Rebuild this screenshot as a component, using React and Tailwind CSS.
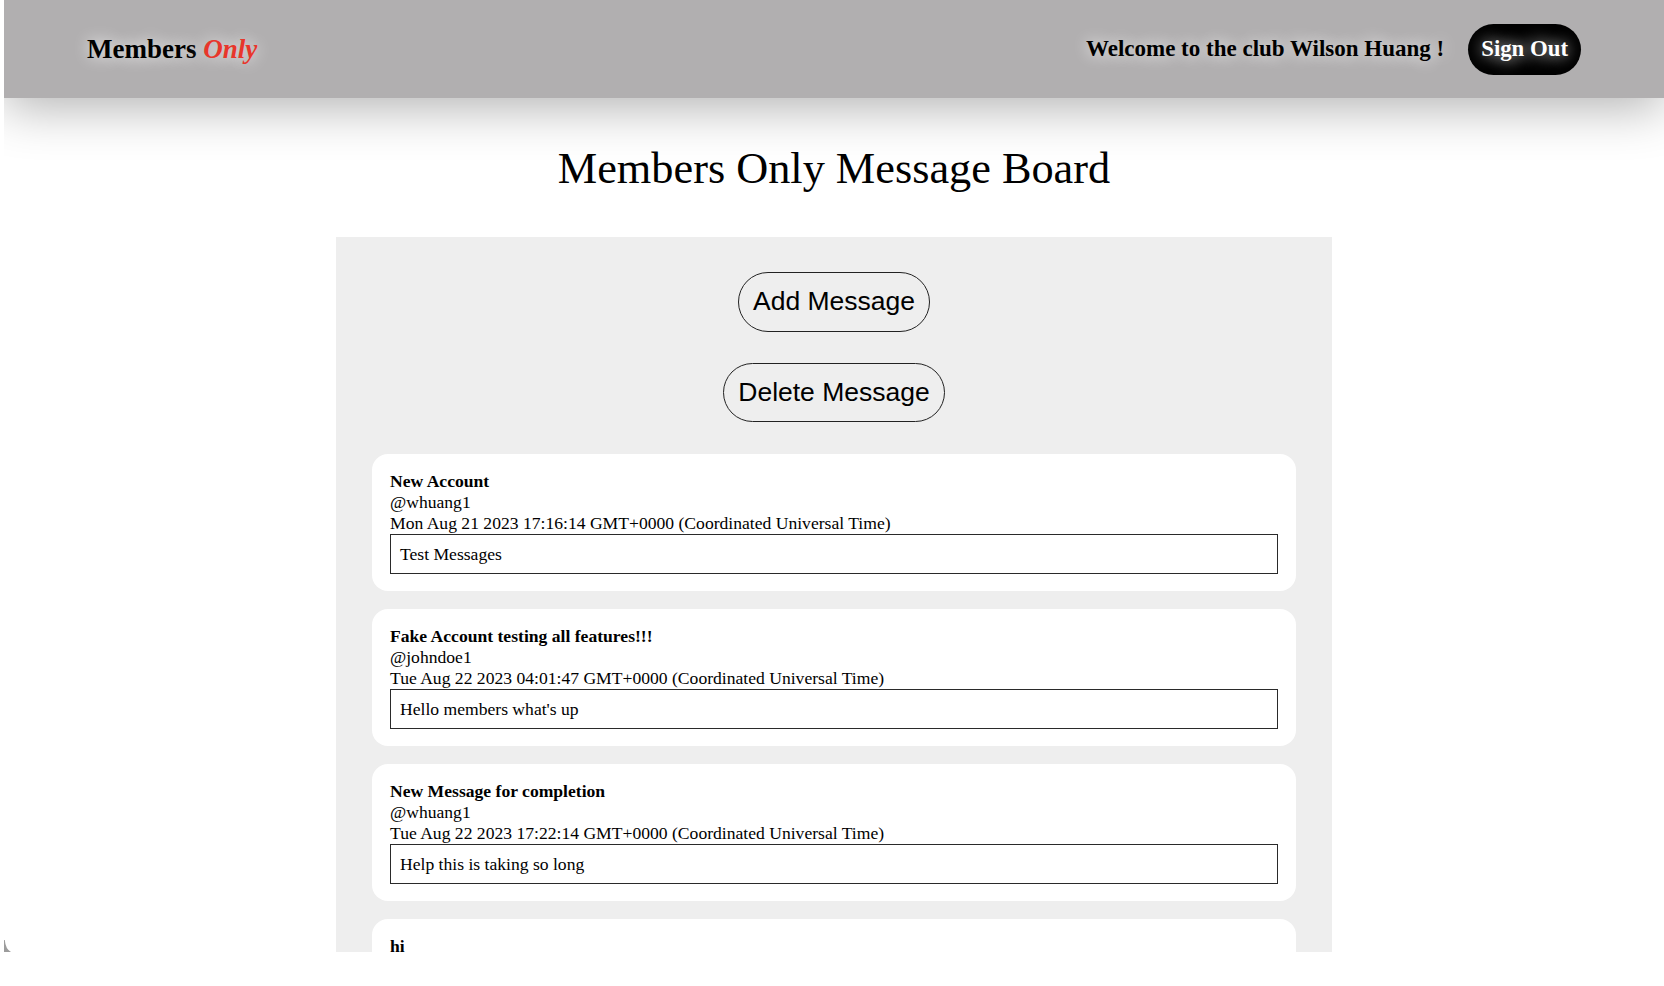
import React from 'react';

const messages = [
  {
    id: 1,
    title: 'New Account',
    username: 'whuang1',
    date: 'Mon Aug 21 2023 17:16:14 GMT+0000 (Coordinated Universal Time)',
    text: 'Test Messages',
  },
  {
    id: 2,
    title: 'Fake Account testing all features!!!',
    username: 'johndoe1',
    date: 'Tue Aug 22 2023 04:01:47 GMT+0000 (Coordinated Universal Time)',
    text: "Hello members what's up",
  },
  {
    id: 3,
    title: 'New Message for completion',
    username: 'whuang1',
    date: 'Tue Aug 22 2023 17:22:14 GMT+0000 (Coordinated Universal Time)',
    text: 'Help this is taking so long',
  },
  {
    id: 4,
    title: 'hi',
    username: 'whuang1',
    date: 'Tue Aug 22 2023 17:40:02 GMT+0000 (Coordinated Universal Time)',
    text: 'hi',
  },
];

const MessageCard = ({ msg }) => (
  <div className="rounded-2xl bg-white px-[18px] pt-[17px] pb-[17px] text-[17.6px] leading-[normal] text-black">
    <div className="font-bold">{msg.title}</div>
    <div>@{msg.username}</div>
    <div>{msg.date}</div>
    <div className="border border-[#2a2a2a] px-[9px] py-[8.5px]">{msg.text}</div>
  </div>
);

const App = () => {
  return (
    <div className="bg-white min-h-[986px]">
      <div className="relative ml-[4px] h-[952px] overflow-hidden bg-white font-['Liberation_Serif',serif]">
        {/* nav */}
        <header className="relative z-10 flex h-[98px] items-center justify-between bg-[#b1afb0] px-[83px] shadow-[0_10px_50px_rgba(0,0,0,0.3)]">
          <h2 className="mt-[1px] text-[27px] font-bold text-black [text-shadow:0_0_16px_#ffffff]">
            Members <em className="text-[#e8362b]">Only</em>
          </h2>
          <div className="flex items-center gap-[24px]">
            <span className="mt-[1px] text-[23px] font-bold text-black [text-shadow:0_0_16px_#ffffff]">
              Welcome to the club Wilson Huang !
            </span>
            <button className="rounded-full bg-black px-[13px] py-[12.5px] text-[22.8px] font-bold leading-[normal] text-white [text-shadow:0_0_16px_#ffffff]">
              Sign Out
            </button>
          </div>
        </header>

        <h1 className="mt-[45px] text-center text-[44.3px] font-normal leading-[normal] text-black">
          Members Only Message Board
        </h1>

        <main className="mx-auto mt-[43px] flex w-[60%] flex-col bg-[#eeeeee] px-[36px] pt-[35px] pb-[36px]">
          <button className="self-center rounded-full border border-[#222] px-[14px] py-[13.25px] font-['Liberation_Sans',Arial,sans-serif] text-[26.5px] leading-[normal] text-black">
            Add Message
          </button>
          <button className="mt-[31px] self-center rounded-full border border-[#222] px-[14px] py-[13.25px] font-['Liberation_Sans',Arial,sans-serif] text-[26.5px] leading-[normal] text-black">
            Delete Message
          </button>
          <div className="mt-[32px] flex flex-col gap-[18px]">
            {messages.map((msg) => (
              <MessageCard key={msg.id} msg={msg} />
            ))}
          </div>
        </main>

        {/* window corner */}
        <svg className="absolute bottom-0 left-0" width="8" height="12" viewBox="0 0 8 12">
          <path d="M0 0 L0 12 L7 12 Q1.5 9 0.8 0 Z" fill="#9c9c9c" />
        </svg>
      </div>
    </div>
  );
};

export default App;
